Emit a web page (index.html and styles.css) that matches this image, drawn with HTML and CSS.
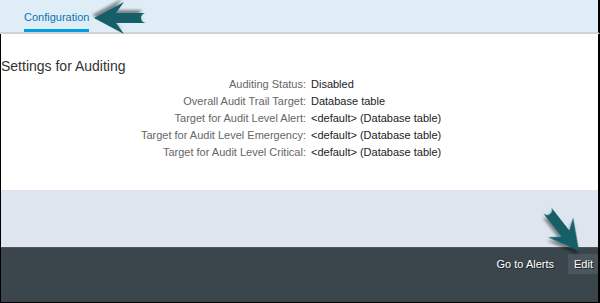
FILE: index.html
```html
<!DOCTYPE html>
<html>
<head>
<meta charset="utf-8">
<link rel="stylesheet" href="styles.css">
</head>
<body>
<div class="page">
  <header class="tabbar">
    <div class="tab">Configuration</div>
  </header>
  <main class="main">
    <section class="settings">
      <h2 class="title">Settings for Auditing</h2>
      <div class="form">
        <div class="label">Auditing Status:</div><div class="value">Disabled</div>
        <div class="label">Overall Audit Trail Target:</div><div class="value">Database table</div>
        <div class="label">Target for Audit Level Alert:</div><div class="value">&lt;default&gt; (Database table)</div>
        <div class="label">Target for Audit Level Emergency:</div><div class="value">&lt;default&gt; (Database table)</div>
        <div class="label">Target for Audit Level Critical:</div><div class="value">&lt;default&gt; (Database table)</div>
      </div>
    </section>
    <div class="spacer"></div>
    <footer class="footer">
      <button class="btn">Go to Alerts</button>
      <button class="btn btn-edit">Edit</button>
    </footer>
  </main>
  <svg class="annot" width="600" height="303" viewBox="0 0 600 303">
    <defs>
      <filter id="sh" x="-30%" y="-30%" width="160%" height="160%">
        <feDropShadow dx="2" dy="3" stdDeviation="1.6" flood-color="#000" flood-opacity="0.45"/>
      </filter>
      <path id="arr" d="M0,0 L-30,-16 L-22,-5 L-52,-5 A5,5 0 0 1 -52,5 L-22,5 L-30,16 Z"/>
    </defs>
    <use href="#arr" class="arrow" filter="url(#sh)" transform="translate(94,18) rotate(180)"/>
    <use href="#arr" class="arrow" filter="url(#sh)" transform="translate(579,251) rotate(52)"/>
  </svg>
</div>
</body>
</html>
```

FILE: styles.css
```css
* { box-sizing: border-box; }
html, body { margin: 0; padding: 0; }
body {
  font-family: "Liberation Sans", Arial, sans-serif;
  font-size: 11px;
  background: #fff;
}
.page {
  position: relative;
  width: 600px;
  height: 303px;
  display: flex;
  flex-direction: column;
  overflow: hidden;
}
.tabbar {
  height: 34px;
  background: #dfeef6;
  border-bottom: 2px solid #cdd3d6;
  border-right: 2px solid #000;
  padding-left: 24px;
  display: flex;
}
.tab {
  height: 32px;
  padding-top: 11px;
  line-height: 13px;
  color: #0a73b4;
  border-bottom: 3px solid #009de0;
}
.main {
  flex: 1;
  display: flex;
  flex-direction: column;
  border-left: 1px solid #000;
  border-right: 2px solid #000;
  border-bottom: 1px solid #000;
}
.settings {
  height: 156px;
  background: #fff;
  padding-top: 24px;
}
.title {
  margin: 0 0 2px;
  font-size: 14px;
  line-height: 16px;
  font-weight: normal;
  color: #333;
}
.form {
  display: grid;
  grid-template-columns: 305px auto;
  column-gap: 5px;
  line-height: 17px;
}
.label { text-align: right; color: #666; }
.value { color: #222; }
.spacer {
  height: 57px;
  background: #dee5ee;
}
.footer {
  flex: 1;
  background: #3a454c;
  border-top: 1px solid #4b575e;
  display: flex;
  justify-content: flex-end;
  align-items: flex-start;
  padding-top: 6px;
  gap: 7px;
}
.btn {
  font-family: "Liberation Sans", Arial, sans-serif;
  font-size: 11px;
  color: #fff;
  background: transparent;
  border: none;
  height: 20px;
  line-height: 20px;
  padding: 0 7px;
  margin: 0;
  text-shadow: 1px 1px 0 #1c2226;
}
.btn-edit {
  background: #4a555c;
  padding: 0 5px 0 6px;
}
.annot {
  position: absolute;
  left: 0;
  top: 0;
  pointer-events: none;
}
.arrow { fill: #135f67; }
```
